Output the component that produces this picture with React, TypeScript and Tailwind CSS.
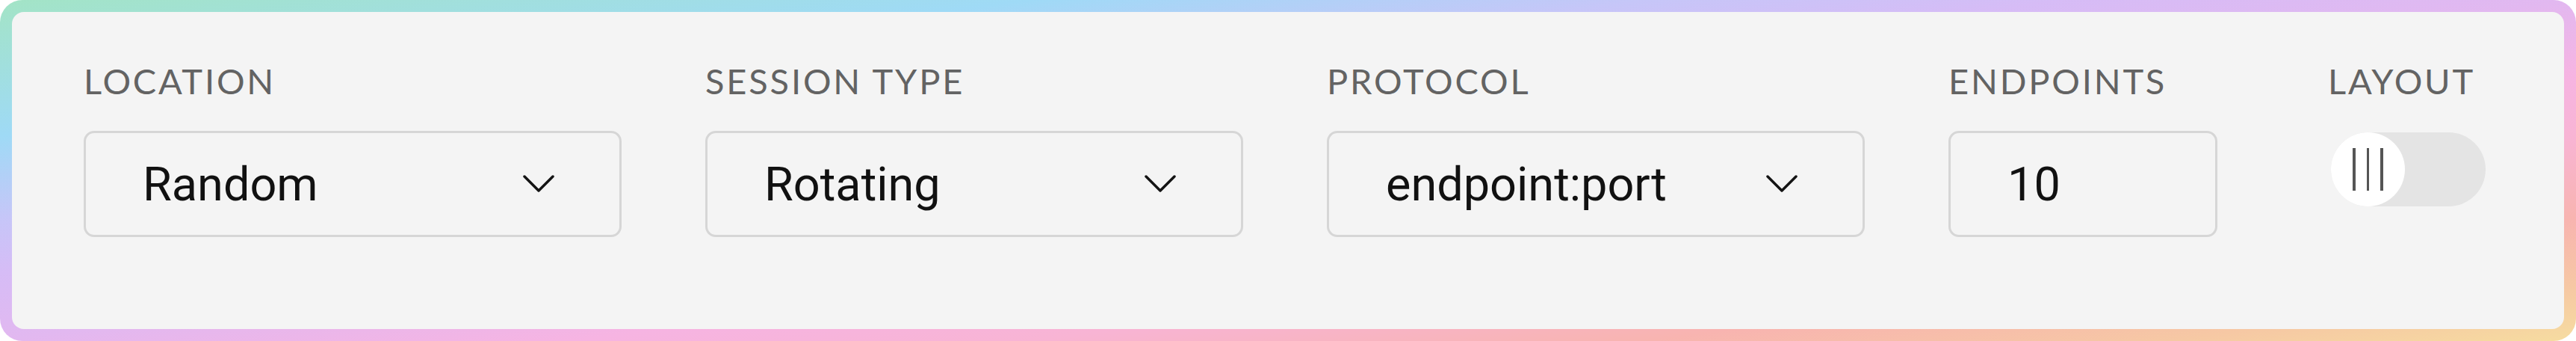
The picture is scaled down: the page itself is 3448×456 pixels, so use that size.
import React from 'react';

const labelCls =
  "font-['Lato',sans-serif] text-[47px] leading-[47px] tracking-[0.06em] text-[#636363] uppercase whitespace-nowrap";
const valueCls = "font-['Roboto',sans-serif] text-[63px] leading-none text-[#111111] whitespace-nowrap";

const Chevron: React.FC = () => (
  <svg width="42" height="24" viewBox="0 0 42 24" fill="none">
    <path d="M2 2 L21 21 L40 2" stroke="#141414" strokeWidth="3.5" strokeLinecap="round" strokeLinejoin="round" />
  </svg>
);

const SelectField: React.FC<{ label: string; value: string }> = ({ label, value }) => (
  <div className="flex flex-col w-[720px] shrink-0">
    <span className={labelCls}>{label}</span>
    <div className="mt-[43px] h-[142px] rounded-[14px] border-[3px] border-[#d6d6d6] flex items-center justify-between pl-[76px] pr-[87px]">
      <span className={valueCls}>{value}</span>
      <Chevron />
    </div>
  </div>
);

const App: React.FC = () => {
  const fields = [
    { label: 'Location', value: 'Random' },
    { label: 'Session type', value: 'Rotating' },
    { label: 'Protocol', value: 'endpoint:port' },
  ];

  return (
    <div className="w-[3448px] h-[456px] p-[16px] rounded-[30px] bg-[linear-gradient(to_bottom_right,#a3e4c6_0%,#9fdaf6_20%,#c6c6f8_32%,#d6bcf6_40%,#e2b8f0_50%,#f6b4e2_61%,#f8b4d4_70%,#f8b4b0_82%,#f6c8a4_92%,#f6dca0_100%)]">
      <div className="h-full rounded-[16px] bg-[#f4f4f4] flex items-start gap-[112px] px-[96px] pt-[69px]">
        {fields.map(f => (
          <SelectField key={f.label} label={f.label} value={f.value} />
        ))}

        {/* Endpoints */}
        <div className="flex flex-col w-[360px] shrink-0">
          <span className={labelCls}>Endpoints</span>
          <div className="mt-[43px] h-[142px] rounded-[14px] border-[3px] border-[#d6d6d6] flex items-center pl-[76px]">
            <span className={valueCls}>10</span>
          </div>
        </div>

        {/* Layout toggle */}
        <div className="flex flex-col ml-[36px]">
          <span className={labelCls}>Layout</span>
          <div className="mt-[45px] ml-[4px] w-[207px] h-[99px] rounded-full bg-[#e4e4e4] flex items-center">
            <div className="w-[99px] h-[99px] rounded-full bg-white flex items-center justify-center gap-[15px]">
              <span className="w-[3.5px] h-[57px] bg-[#555555]" />
              <span className="w-[3.5px] h-[57px] bg-[#555555]" />
              <span className="w-[3.5px] h-[57px] bg-[#555555]" />
            </div>
          </div>
        </div>
      </div>
    </div>
  );
};

export default App;
